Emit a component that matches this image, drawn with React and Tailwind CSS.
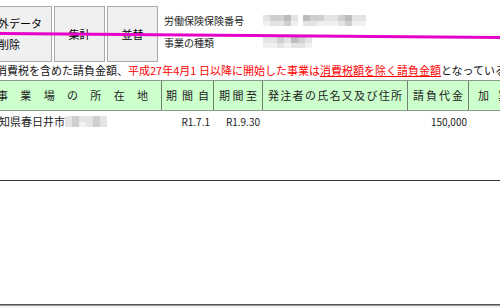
import React from "react";

function Mosaic({ top, bottom }) {
  return (
    <div className="flex">
      {top.map((t, i) => (
        <div key={i} className="flex flex-col">
          <div className={`w-[7px] h-[6px] ${t}`} />
          <div className={`w-[7px] h-[5px] ${bottom[i]}`} />
        </div>
      ))}
    </div>
  );
}

const D = "bg-[#bcbcbc]";
const M = "bg-[#cfcfcf]";
const L = "bg-[#e4e4e4]";
const W = "bg-[#f0f0f0]";

function Btn({ w, children }) {
  return (
    <div
      className={`${w} h-[56px] shrink-0 flex items-center justify-center text-center bg-[#f0f0f0] border border-[#a9a9a9] text-[11px] leading-[21px] text-black`}
    >
      {children}
    </div>
  );
}

function HCell({ w, className = "", children }) {
  return (
    <div
      className={`${w} shrink-0 h-full flex items-center justify-between border-r border-[#6f7f6f] ${className}`}
    >
      {children.split("").map((c, i) => (
        <span key={i}>{c}</span>
      ))}
    </div>
  );
}

export default function App() {
  return (
    <div
      className="relative w-[500px] h-[308px] overflow-hidden bg-white text-[#111]"
      style={{ fontFamily: '"Noto Sans CJK JP", "Noto Sans", sans-serif' }}
    >
      <div className="-ml-[34px] w-[640px]">
        {/* top area */}
        <div className="flex pt-[6px] h-[62px]">
          <Btn w="w-[86px]">
            <span>
              対象外データ
              <br />
              削除
            </span>
          </Btn>
          <div className="w-[2px]" />
          <Btn w="w-[51px]">集計</Btn>
          <div className="w-[2px]" />
          <Btn w="w-[51px]">並替</Btn>
          <div className="ml-[6px] flex flex-col text-[10px] text-[#222]">
            <div className="flex items-center h-[16px] mt-[6px]">
              <span className="w-[99px]">労働保険保険番号</span>
              <div className="flex">
                <Mosaic top={[L, M, M, D, L]} bottom={[W, L, L, M, W]} />
                <div className="w-[5px]" />
                <Mosaic
                  top={[D, M, M, L, L, M, D, L, L]}
                  bottom={[L, L, W, W, W, L, M, W, W]}
                />
              </div>
            </div>
            <div className="flex items-center h-[16px] mt-[6px]">
              <span className="w-[99px]">事業の種類</span>
              <Mosaic
                top={[L, L, M, L, D, M, L]}
                bottom={[W, W, L, W, L, L, W]}
              />
            </div>
          </div>
        </div>

        {/* note line */}
        <div className="h-[18px] leading-[16px] text-[11px] whitespace-nowrap pl-[19px]">
          <span>は消費税を含めた請負金額、</span>
          <span className="text-[#ff0000]">平成27年4月1 日以降に開始した事業は</span>
          <span className="text-[#ff0000] underline">消費税額を除く請負金額</span>
          <span>となっている事業</span>
        </div>

        {/* header */}
        <div className="flex h-[31px] bg-[#ccffcc] border-y border-[#8a9a8a] text-[11px] text-[#222] pl-[14px]">
          <HCell w="w-[182px]" className="pl-[17px] pr-[13px]">
            事業場の所在地
          </HCell>
          <HCell w="w-[52px]" className="px-[4px]">期間自</HCell>
          <HCell w="w-[49px]" className="px-[5px]">期間至</HCell>
          <HCell w="w-[145px]" className="px-[5px]">
            発注者の氏名又及び住所
          </HCell>
          <HCell w="w-[61px]" className="px-[5px]">請負代金</HCell>
          <div className="w-[90px] h-full flex items-center pl-[9px] tracking-[9px]">
            加算額
          </div>
        </div>

        {/* data row */}
        <div className="flex h-[19px] items-center text-[11px] text-[#222] pl-[14px] pt-[2px]">
          <div className="w-[182px] shrink-0 flex items-center pl-[8px] whitespace-nowrap">
            <span>愛知県春日井市</span>
            <Mosaic
              top={[L, M, L, L, M, L]}
              bottom={[L, M, W, L, M, L]}
            />
          </div>
          <div className="w-[52px] shrink-0 text-right pr-[4px] text-[10px]">R1.7.1</div>
          <div className="w-[49px] shrink-0 text-right pr-[3px] text-[10px]">R1.9.30</div>
          <div className="w-[145px] shrink-0" />
          <div className="w-[61px] shrink-0 text-right pr-[2px] text-[10px]">150,000</div>
        </div>

        <div className="h-[50px]" />
        <div className="h-px bg-[#333]" />
        <div className="h-[123px]" />
        <div className="h-px bg-[#555]" />
        <div className="h-px bg-[#9a9a9a]" />
        <div className="h-[3px] bg-[#f4f4f4]" />
      </div>

      <svg
        className="absolute left-0 top-0 pointer-events-none"
        width="500"
        height="308"
        viewBox="0 0 500 308"
      >
        <line
          x1="0"
          y1="33.5"
          x2="500"
          y2="37.5"
          stroke="#e600c8"
          strokeWidth="3"
        />
      </svg>
    </div>
  );
}
